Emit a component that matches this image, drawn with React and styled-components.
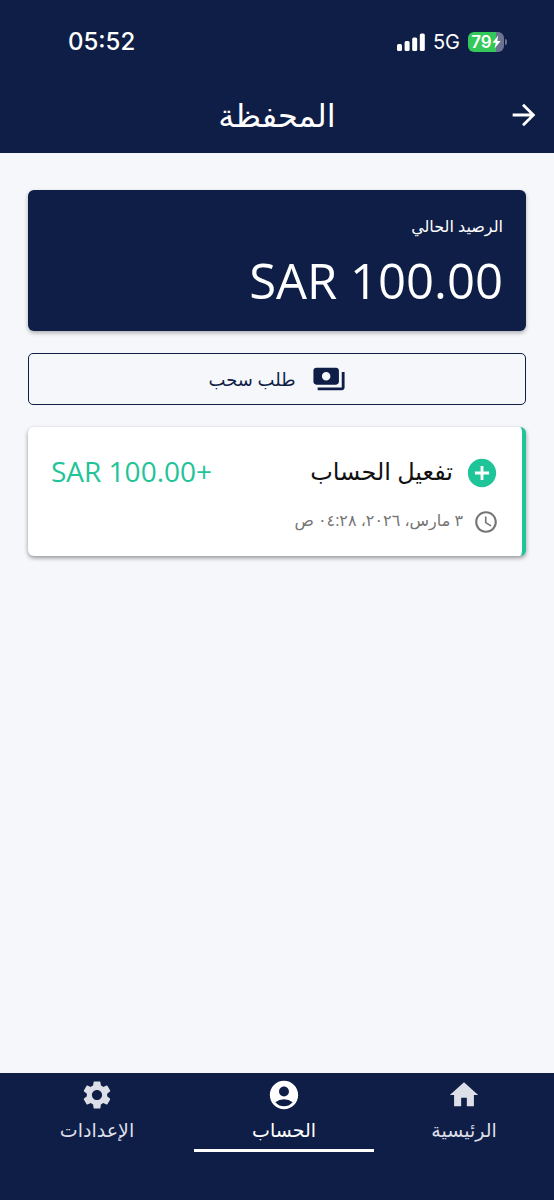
import React, { useState } from "react";
import styled, { createGlobalStyle } from "styled-components";
import {
    MdAccessTime,
    MdAccountCircle,
    MdAddCircle,
    MdArrowForward,
    MdHome,
    MdPayments,
    MdSettings,
} from "react-icons/md";

const transactions = [
    {
        id: 1,
        title: "تفعيل الحساب",
        amount: "SAR 100.00+",
        date: "٣ مارس، ٢٠٢٦، ٠٤:٢٨ ص",
    },
];

const tabs = [
    { id: "home", label: "الرئيسية", Icon: MdHome },
    { id: "account", label: "الحساب", Icon: MdAccountCircle },
    { id: "settings", label: "الإعدادات", Icon: MdSettings },
];

const StatusBar = () => (
    <StStatusBar dir="ltr">
        <StTime>05:52</StTime>
        <StStatusIcons>
            <svg width="28" height="18" viewBox="0 0 28 18" fill="#fff">
                <rect x="0" y="11" width="5" height="7" rx="1.5" />
                <rect x="7.6" y="8" width="5" height="10" rx="1.5" />
                <rect x="15.2" y="4.5" width="5" height="13.5" rx="1.5" />
                <rect x="22.8" y="0.5" width="5" height="17.5" rx="1.5" />
            </svg>
            <StNetwork>5G</StNetwork>
            <StBattery>
                <StLevel>79</StLevel>
                <svg width="9" height="14" viewBox="0 0 9 14" fill="#fff">
                    <path d="M6.2 0.5 0.5 7.7h3.3L2.6 13.5 8.6 6H5.2z" />
                </svg>
            </StBattery>
            <StBatteryTip />
        </StStatusIcons>
    </StStatusBar>
);

const Transaction = ({ item }) => (
    <StTransaction>
        <StTransactionRow>
            <MdAddCircle size={34} color="#1fc498" />
            <StTransactionTitle>{item.title}</StTransactionTitle>
            <StAmount dir="ltr">{item.amount}</StAmount>
        </StTransactionRow>
        <StDateRow>
            <MdAccessTime size={26} />
            <StDate>{item.date}</StDate>
        </StDateRow>
    </StTransaction>
);

const App = () => {
    // selected tab state
    const [activeTab, setActiveTab] = useState("account");

    return (
        <StPage dir="rtl" lang="ar">
            <GlobalStyle />
            <StHeader>
                <StatusBar />
                <StAppBar>
                    <StBackButton type="button" aria-label="رجوع">
                        <MdArrowForward size={34} />
                    </StBackButton>
                    <StTitle>المحفظة</StTitle>
                </StAppBar>
            </StHeader>
            <StMain>
                <StBalance>
                    <StBalanceLabel>الرصيد الحالي</StBalanceLabel>
                    <StBalanceValue dir="ltr">SAR 100.00</StBalanceValue>
                </StBalance>
                <StWithdrawButton type="button">
                    <MdPayments size={34} />
                    <span>طلب سحب</span>
                </StWithdrawButton>
                {transactions.map((item) => (
                    <Transaction key={item.id} item={item} />
                ))}
            </StMain>
            <StNav>
                {tabs.map(({ id, label, Icon }) => (
                    <StTab
                        key={id}
                        type="button"
                        $active={id === activeTab}
                        onClick={() => setActiveTab(id)}
                    >
                        <Icon size={34} />
                        <StTabLabel>{label}</StTabLabel>
                    </StTab>
                ))}
            </StNav>
        </StPage>
    );
};

const GlobalStyle = createGlobalStyle`
    * {
        box-sizing: border-box;
    }

    body {
        margin: 0;
        background-color: #f5f7fb;
    }

    button {
        font-family: inherit;
        cursor: pointer;
    }

    svg {
        display: block;
        flex-shrink: 0;
    }
`;

const StPage = styled.div`
    min-height: 100vh;
    display: flex;
    flex-direction: column;
    font-family: "Open Sans", "DejaVu Sans", sans-serif;
    background-color: #f5f7fb;
`;

const StHeader = styled.header`
    color: #fff;
    background-color: #0f1e46;
`;

const StStatusBar = styled.div`
    height: 80px;
    padding: 3px 47px 0 68px;
    display: flex;
    align-items: center;
    justify-content: space-between;
    font-family: Inter, sans-serif;
`;

const StTime = styled.span`
    font-size: 24px;
    font-weight: 500;
    line-height: 28px;
`;

const StStatusIcons = styled.div`
    display: flex;
    align-items: center;
`;

const StNetwork = styled.span`
    margin: 0 8px;
    font-size: 20px;
    line-height: 24px;
`;

const StBattery = styled.div`
    width: 36px;
    height: 20px;
    border-radius: 6px;
    display: flex;
    align-items: center;
    justify-content: center;
    background: linear-gradient(to right, #34c759 78%, #6b7390 78%);
`;

const StLevel = styled.span`
    font-size: 17px;
    font-weight: 600;
    line-height: 20px;
`;

const StBatteryTip = styled.span`
    width: 2px;
    height: 6px;
    margin-left: 1px;
    border-radius: 0 2px 2px 0;
    background-color: #6b7390;
`;

const StAppBar = styled.div`
    height: 73px;
    padding: 0 13px 3px;
    display: grid;
    grid-template-columns: 34px 1fr 34px;
    align-items: center;
`;

const StBackButton = styled.button`
    padding: 0;
    border: none;
    color: inherit;
    background: none;
`;

const StTitle = styled.h1`
    margin: 0;
    font-size: 32px;
    font-weight: 400;
    line-height: 40px;
    text-align: center;
`;

const StMain = styled.main`
    flex: 1;
    padding: 37px 28px;
    display: flex;
    flex-direction: column;
    gap: 22px;
`;

const StBalance = styled.section`
    padding: 22px 23px 12px;
    border-radius: 6px;
    color: #fff;
    background-color: #0f1e46;
    box-shadow: 0 2px 4px rgba(0, 0, 0, 0.3);
`;

const StBalanceLabel = styled.p`
    margin: 0;
    font-size: 16px;
    line-height: 29px;
`;

const StBalanceValue = styled.p`
    margin: 0;
    font-size: 49px;
    line-height: 78px;
    text-align: right;
`;

const StWithdrawButton = styled.button`
    height: 52px;
    border: 1px solid #0f1e46;
    border-radius: 5px;
    display: flex;
    align-items: center;
    justify-content: center;
    gap: 16px;
    font-size: 18px;
    line-height: 30px;
    color: #0f1e46;
    background-color: transparent;
`;

const StTransaction = styled.article`
    padding: 26px 23px 20px;
    border-right: 4px solid #1fc498;
    border-radius: 6px;
    background-color: #fff;
    box-shadow: 0 2px 4px rgba(0, 0, 0, 0.4);
`;

const StTransactionRow = styled.div`
    display: flex;
    align-items: center;
    gap: 12px;
`;

const StTransactionTitle = styled.h2`
    flex: 1;
    margin: 0;
    padding-bottom: 4px;
    font-size: 24px;
    font-weight: 400;
    line-height: 36px;
    color: #111;
`;

const StAmount = styled.span`
    padding-bottom: 4px;
    font-size: 28px;
    line-height: 36px;
    color: #1fc498;
`;

const StDateRow = styled.div`
    padding-top: 14px;
    display: flex;
    align-items: center;
    gap: 10px;
    color: #757575;
`;

const StDate = styled.time`
    padding-bottom: 3px;
    font-size: 16px;
    line-height: 26px;
`;

const StNav = styled.nav`
    height: 127px;
    padding-bottom: 48px;
    display: grid;
    grid-template-columns: 180fr 180fr 194fr;
    background-color: #0f1e46;
`;

const StTab = styled.button`
    padding: 5px 0 0;
    border: none;
    border-bottom: 3px solid ${({ $active }) => ($active ? "#fff" : "transparent")};
    display: flex;
    flex-direction: column;
    align-items: center;
    color: ${({ $active }) => ($active ? "#fff" : "#dcdfe8")};
    background: none;
`;

const StTabLabel = styled.span`
    font-size: 19px;
    line-height: 36px;
`;

export default App;
